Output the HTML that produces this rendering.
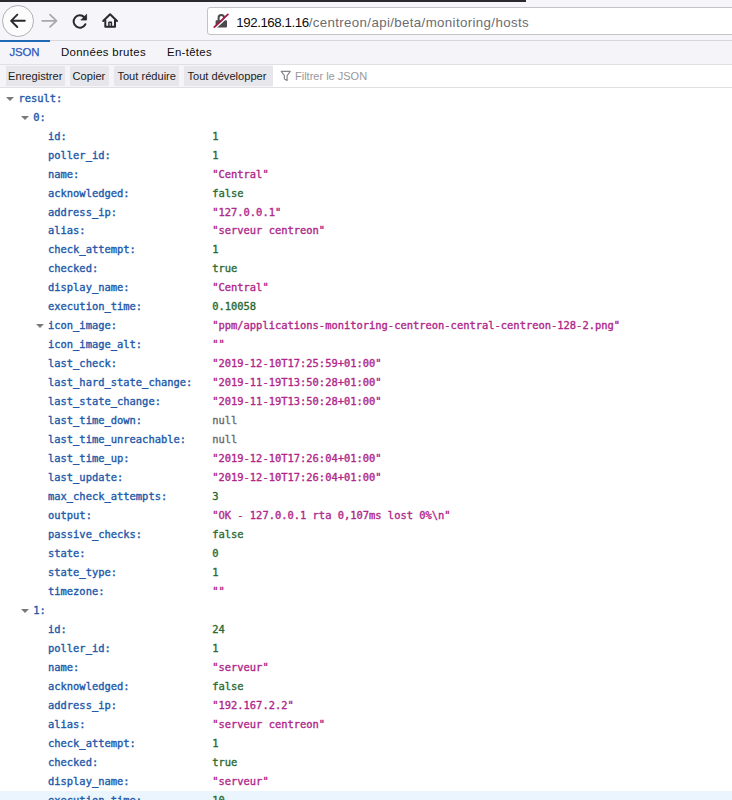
<!DOCTYPE html>
<html lang="fr">
<head>
<meta charset="utf-8">
<title>JSON</title>
<style>
html,body{margin:0;padding:0;}
body{width:732px;height:800px;overflow:hidden;background:#fff;position:relative;font-family:"Liberation Sans",sans-serif;color:#0c0c0d;}
.abs{position:absolute;}
#topdark{left:0;top:0;width:526px;height:1.6px;background:#2a2a2e;}
#chrome{left:0;top:0;width:732px;height:40px;background:#f6f6fa;border-bottom:1px solid #d7d7db;}
#urlbar{left:207px;top:7px;width:540px;height:28px;background:#fff;border:1px solid #c3c3c6;border-radius:3px;box-sizing:border-box;}
#url{left:236.3px;top:14.8px;font-size:13.3px;line-height:16px;color:#6c6c70;white-space:nowrap;letter-spacing:0.36px;}
#url b{font-weight:normal;color:#0c0c0d;letter-spacing:-0.44px;}
#backbtn{left:2.1px;top:4.9px;width:31.8px;height:31.8px;border:1px solid #b1b1b3;border-radius:50%;box-sizing:border-box;background:#fcfcfc;}
#tabs{left:0;top:41px;width:732px;height:22.7px;background:#f5f5f9;border-bottom:1px solid #e0e0e2;}
#tabline{left:0;top:40.4px;width:50px;height:2.1px;background:#1e68b4;}
.tab{top:45.3px;font-size:11.4px;line-height:14px;letter-spacing:0.32px;white-space:nowrap;color:#0c0c0d;}
#toolbar{left:0;top:64.7px;width:732px;height:22.4px;background:#f5f5f9;border-bottom:1px solid #e0e0e2;}
.btn{top:65.8px;height:19.8px;background:#e6e6eb;border-radius:1px;font-size:11.1px;line-height:21px;text-align:left;white-space:nowrap;color:#1c1c20;box-sizing:border-box;}
#filter{left:295px;top:66px;font-size:11px;line-height:20px;color:#98989c;white-space:nowrap;}
#rows{left:0;top:0;width:732px;font-family:"DejaVu Sans Mono","Liberation Mono",monospace;font-size:10.43px;-webkit-text-stroke:0.35px currentColor;}
.r{position:absolute;left:0;width:732px;height:19px;line-height:19px;white-space:nowrap;}
.r .k{position:absolute;top:0;color:#2058aa;}
.r .v{position:absolute;top:0;left:212.2px;}
.s{color:#b0268a;}
.n{color:#2a6a30;}
.z{color:#6a6a6e;}
.hov{background:#eaf5fd;}
.tw{position:absolute;width:0;height:0;border-left:4px solid transparent;border-right:4px solid transparent;border-top:4.8px solid #79797d;top:7.8px;margin-left:-0.5px;}
</style>
</head>
<body>
<div class="abs" id="chrome"></div>
<div class="abs" id="topdark"></div>
<div class="abs" id="backbtn"></div>
<svg class="abs" style="left:0;top:0" width="210" height="41" viewBox="0 0 210 41" fill="none" stroke-linecap="round" stroke-linejoin="round">
  <!-- back arrow -->
  <path d="M11.4 20.8 H24.8 M17.3 14.6 L11.1 20.8 L17.3 27" stroke="#2a2a2e" stroke-width="1.9"/>
  <!-- forward arrow -->
  <path d="M42.2 20.8 H56.2 M50 14.7 L56.5 20.8 L50 26.9" stroke="#a9a9ad" stroke-width="1.8"/>
  <!-- reload -->
  <path d="M84.3 17.2 A6.2 6.2 0 1 0 85.4 24.2" stroke="#2a2a2e" stroke-width="2"/>
  <path d="M86.6 14.6 V20 H81.2 Z" fill="#2a2a2e" stroke="#2a2a2e" stroke-width="0.8"/>
  <!-- home -->
  <path d="M103.2 21 L110.1 14.3 L117 21" stroke="#2a2a2e" stroke-width="2"/>
  <path d="M105.3 20.5 V26.7 H115 V20.5" stroke="#2a2a2e" stroke-width="2"/>
  <path d="M108.9 26.5 V22.2 H111.4 V26.5" stroke="#2a2a2e" stroke-width="1.5"/>
</svg>
<div class="abs" id="urlbar"></div>
<svg class="abs" style="left:212px;top:12px" width="20" height="18" viewBox="0 0 20 18" fill="none">
  <path d="M6.6 9 V5.8 A2.7 2.7 0 0 1 12 5.8 V9" stroke="#4a4a4f" stroke-width="2"/>
  <rect x="3.6" y="8.3" width="11.4" height="7.1" rx="0.8" fill="#4a4a4f"/>
  <path d="M3.4 16.3 L16.8 3.6" stroke="#fff" stroke-width="1.5" stroke-linecap="round"/>
  <path d="M2.3 15.1 L15.9 2.4" stroke="#a31a45" stroke-width="1.8" stroke-linecap="round"/>
</svg>
<div class="abs" id="url"><b>192.168.1.16</b>/centreon/api/beta/monitoring/hosts</div>

<div class="abs" id="tabs"></div>
<div class="abs" id="tabline"></div>
<div class="abs tab" style="left:9.5px;color:#2c58bb;letter-spacing:-0.1px;-webkit-text-stroke:0.25px #2c58bb;">JSON</div>
<div class="abs tab" style="left:61px;">Données brutes</div>
<div class="abs tab" style="left:167px;">En-têtes</div>

<div class="abs" id="toolbar"></div>
<div class="abs" style="left:272.8px;top:64.9px;width:460px;height:22.2px;background:#fff;"></div>
<div class="abs btn" style="left:6px;width:59.3px;padding-left:2.1px;">Enregistrer</div>
<div class="abs btn" style="left:70px;width:39px;padding-left:2.6px;">Copier</div>
<div class="abs btn" style="left:113.5px;width:65.7px;padding-left:3.9px;">Tout réduire</div>
<div class="abs btn" style="left:183.6px;width:89px;padding-left:3.9px;">Tout développer</div>
<svg class="abs" style="left:280px;top:70px" width="12" height="12" viewBox="0 0 12 12"><path d="M1.2 1.4 H10.3 L7.1 5.6 V10.4 L4.4 8.9 V5.6 Z" fill="none" stroke="#85858a" stroke-width="1.15" stroke-linejoin="round"/></svg>
<div class="abs" id="filter">Filtrer le JSON</div>

<div class="abs hov" style="left:0;top:790.7px;width:732px;height:19px;"></div>
<div class="abs" id="rows">
<div class="r" style="top:89px"><i class="tw" style="left:6px"></i><span class="k" style="left:18.4px">result:</span></div>
<div class="r" style="top:108px"><i class="tw" style="left:21px"></i><span class="k" style="left:33.3px">0:</span></div>
<div class="r" style="top:127px"><span class="k" style="left:48px">id:</span><span class="v n">1</span></div>
<div class="r" style="top:146px"><span class="k" style="left:48px">poller_id:</span><span class="v n">1</span></div>
<div class="r" style="top:165px"><span class="k" style="left:48px">name:</span><span class="v s">"Central"</span></div>
<div class="r" style="top:184px"><span class="k" style="left:48px">acknowledged:</span><span class="v n">false</span></div>
<div class="r" style="top:203px"><span class="k" style="left:48px">address_ip:</span><span class="v s">"127.0.0.1"</span></div>
<div class="r" style="top:221px"><span class="k" style="left:48px">alias:</span><span class="v s">"serveur centreon"</span></div>
<div class="r" style="top:240px"><span class="k" style="left:48px">check_attempt:</span><span class="v n">1</span></div>
<div class="r" style="top:259px"><span class="k" style="left:48px">checked:</span><span class="v n">true</span></div>
<div class="r" style="top:278px"><span class="k" style="left:48px">display_name:</span><span class="v s">"Central"</span></div>
<div class="r" style="top:297px"><span class="k" style="left:48px">execution_time:</span><span class="v n">0.10058</span></div>
<div class="r" style="top:316px"><i class="tw" style="left:36px"></i><span class="k" style="left:48px">icon_image:</span><span class="v s">"ppm/applications-monitoring-centreon-central-centreon-128-2.png"</span></div>
<div class="r" style="top:335px"><span class="k" style="left:48px">icon_image_alt:</span><span class="v s">""</span></div>
<div class="r" style="top:354px"><span class="k" style="left:48px">last_check:</span><span class="v s">"2019-12-10T17:25:59+01:00"</span></div>
<div class="r" style="top:373px"><span class="k" style="left:48px">last_hard_state_change:</span><span class="v s">"2019-11-19T13:50:28+01:00"</span></div>
<div class="r" style="top:392px"><span class="k" style="left:48px">last_state_change:</span><span class="v s">"2019-11-19T13:50:28+01:00"</span></div>
<div class="r" style="top:411px"><span class="k" style="left:48px">last_time_down:</span><span class="v z">null</span></div>
<div class="r" style="top:430px"><span class="k" style="left:48px">last_time_unreachable:</span><span class="v z">null</span></div>
<div class="r" style="top:449px"><span class="k" style="left:48px">last_time_up:</span><span class="v s">"2019-12-10T17:26:04+01:00"</span></div>
<div class="r" style="top:468px"><span class="k" style="left:48px">last_update:</span><span class="v s">"2019-12-10T17:26:04+01:00"</span></div>
<div class="r" style="top:487px"><span class="k" style="left:48px">max_check_attempts:</span><span class="v n">3</span></div>
<div class="r" style="top:506px"><span class="k" style="left:48px">output:</span><span class="v s">"OK - 127.0.0.1 rta 0,107ms lost 0%\n"</span></div>
<div class="r" style="top:525px"><span class="k" style="left:48px">passive_checks:</span><span class="v n">false</span></div>
<div class="r" style="top:544px"><span class="k" style="left:48px">state:</span><span class="v n">0</span></div>
<div class="r" style="top:563px"><span class="k" style="left:48px">state_type:</span><span class="v n">1</span></div>
<div class="r" style="top:582px"><span class="k" style="left:48px">timezone:</span><span class="v s">""</span></div>
<div class="r" style="top:601px"><i class="tw" style="left:21px"></i><span class="k" style="left:33.3px">1:</span></div>
<div class="r" style="top:620px"><span class="k" style="left:48px">id:</span><span class="v n">24</span></div>
<div class="r" style="top:639px"><span class="k" style="left:48px">poller_id:</span><span class="v n">1</span></div>
<div class="r" style="top:658px"><span class="k" style="left:48px">name:</span><span class="v s">"serveur"</span></div>
<div class="r" style="top:677px"><span class="k" style="left:48px">acknowledged:</span><span class="v n">false</span></div>
<div class="r" style="top:696px"><span class="k" style="left:48px">address_ip:</span><span class="v s">"192.167.2.2"</span></div>
<div class="r" style="top:715px"><span class="k" style="left:48px">alias:</span><span class="v s">"serveur centreon"</span></div>
<div class="r" style="top:734px"><span class="k" style="left:48px">check_attempt:</span><span class="v n">1</span></div>
<div class="r" style="top:753px"><span class="k" style="left:48px">checked:</span><span class="v n">true</span></div>
<div class="r" style="top:772px"><span class="k" style="left:48px">display_name:</span><span class="v s">"serveur"</span></div>
<div class="r" style="top:791px"><span class="k" style="left:48px">execution_time:</span><span class="v n">10</span></div>
</div>
</body>
</html>
